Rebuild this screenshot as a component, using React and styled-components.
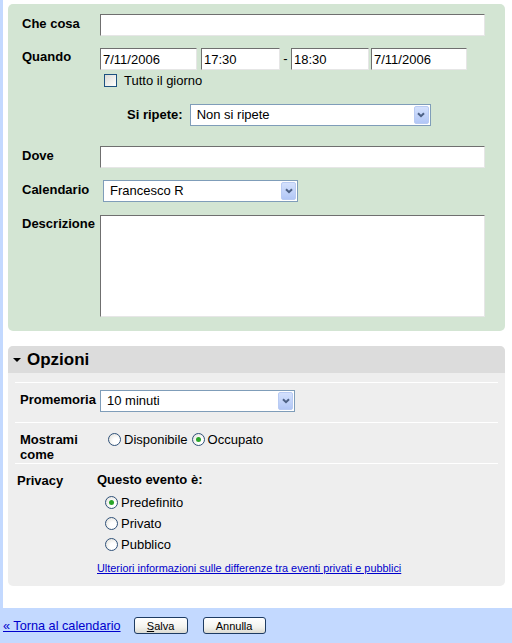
import React from "react";
import styled, { createGlobalStyle } from "styled-components";

const GlobalStyle = createGlobalStyle`
  body {
    margin: 0;
    background: #fff;
    font-family: "Liberation Sans", Arial, sans-serif;
    font-size: 13px;
    color: #000;
  }
`;

const Page = styled.div`
  min-height: 643px;
  display: flex;
  flex-direction: column;
`;

const Main = styled.main`
  flex: 1;
  border-left: 3px solid #c3d9ff;
  padding: 4px 7px 22px 5px;
  display: flex;
  flex-direction: column;
  gap: 15px;
`;

const EventPanel = styled.section`
  background: #d3e5d3;
  border-radius: 5px;
  padding: 10px 20px 14px 14px;
`;

const Row = styled.div`
  display: flex;
  align-items: ${({ $center }) => ($center ? "center" : "flex-start")};
  margin-top: ${({ $top }) => $top || 0}px;
  padding-left: ${({ $indent }) => $indent || 0}px;
`;

const Label = styled.label`
  width: ${({ $width }) => ($width ? `${$width}px` : "auto")};
  flex-shrink: 0;
  font-weight: bold;
  line-height: ${({ $lh }) => $lh || 16}px;
  padding-top: ${({ $pad }) => $pad || 0}px;
  margin-right: ${({ $gap }) => $gap || 0}px;
`;

const fieldBorder = `
  border: 1px solid;
  border-color: #6f6f6f #e6e6e6 #e6e6e6 #6f6f6f;
`;

const TextInput = styled.input`
  box-sizing: border-box;
  height: 22px;
  width: ${({ $width }) => ($width ? `${$width}px` : "auto")};
  flex: ${({ $width }) => ($width ? "none" : 1)};
  min-width: 0;
  ${fieldBorder}
  background: #fff;
  font: 13px "Liberation Sans", Arial, sans-serif;
  color: #000;
  padding: 0 2px;
  margin: 0 ${({ $gap }) => $gap || 0}px 0 0;
  outline: none;
`;

const TextArea = styled.textarea`
  box-sizing: border-box;
  flex: 1;
  height: 102px;
  ${fieldBorder}
  background: #fff;
  font: 13px "Liberation Sans", Arial, sans-serif;
  resize: none;
  margin: 0;
  padding: 2px;
  outline: none;
`;

const Dash = styled.span`
  width: 11px;
  text-align: center;
  line-height: 22px;
`;

const FieldColumn = styled.div`
  display: flex;
  flex-direction: column;
`;

const CheckRow = styled.label`
  display: flex;
  align-items: center;
  margin: 4px 0 0 4px;
  line-height: 13px;
  gap: 7px;
`;

const CheckBox = styled.span`
  box-sizing: border-box;
  width: 13px;
  height: 13px;
  border: 1px solid #1c5180;
  background: linear-gradient(135deg, #dcdcd7, #fff);
`;

const SelectBox = styled.div`
  box-sizing: border-box;
  width: ${({ $width }) => $width}px;
  height: 22px;
  margin-left: ${({ $offset }) => $offset || 0}px;
  border: 1px solid #7f9db9;
  background: #fff;
  display: flex;
  align-items: center;
  padding: 0 1px 0 6px;
`;

const SelectText = styled.span`
  flex: 1;
  line-height: 16px;
  white-space: nowrap;
`;

const SelectButton = styled.span`
  box-sizing: border-box;
  width: 15px;
  height: 18px;
  border-radius: 2px;
  border: 1px solid #b9cbf3;
  background: linear-gradient(#d4e1fd, #b2c7f6);
  display: flex;
  align-items: center;
  justify-content: center;
`;

const Select = ({ width, offset, children }) => (
  <SelectBox $width={width} $offset={offset}>
    <SelectText>{children}</SelectText>
    <SelectButton>
      <svg width="8" height="6" viewBox="0 0 8 6">
        <path d="M1 1.2 L4 4.2 L7 1.2" stroke="#4d6185" strokeWidth="2" fill="none" />
      </svg>
    </SelectButton>
  </SelectBox>
);

const OptionsPanel = styled.section`
  background: #eeeeee;
  border-radius: 5px;
  overflow: hidden;
`;

const OptionsHeader = styled.h2`
  margin: 0;
  height: 27px;
  background: #dcdcdc;
  display: flex;
  align-items: center;
  padding-left: 5px;
  gap: 6px;
  font-size: 17px;
  font-weight: bold;
`;

const Triangle = styled.span`
  width: 0;
  height: 0;
  border-left: 4px solid transparent;
  border-right: 4px solid transparent;
  border-top: 4px solid #000;
`;

const OptionsBody = styled.div`
  padding: 9px 7px 0;
`;

const OptionRow = styled.div`
  border-top: 1px solid #fff;
  display: flex;
  align-items: flex-start;
  padding: ${({ $pad }) => $pad};
`;

const RadioGroup = styled.div`
  display: flex;
  flex-direction: ${({ $column }) => ($column ? "column" : "row")};
  margin: ${({ $margin }) => $margin || 0};
  gap: ${({ $gap }) => $gap || 0}px;
`;

const RadioOption = styled.label`
  display: flex;
  align-items: center;
  height: ${({ $height }) => $height || 15}px;
  gap: 3px;
`;

const RadioDot = styled.span`
  box-sizing: border-box;
  width: 13px;
  height: 13px;
  border-radius: 50%;
  border: 1px solid #2f5179;
  background: radial-gradient(circle at 65% 65%, #fff 30%, #dedcd4);
  display: flex;
  align-items: center;
  justify-content: center;

  &::after {
    content: "";
    width: 5px;
    height: 5px;
    border-radius: 50%;
    background: ${({ $checked }) => ($checked ? "#2aa52a" : "transparent")};
  }
`;

const Radio = ({ checked, height, children }) => (
  <RadioOption $height={height}>
    <RadioDot $checked={checked} />
    {children}
  </RadioOption>
);

const SubTitle = styled.div`
  font-weight: bold;
  line-height: 16px;
`;

const Link = styled.a`
  color: #0000cc;
  text-decoration: underline;
  font-size: ${({ $size }) => $size || 13}px;
  line-height: ${({ $size }) => ($size ? $size + 2 : 16)}px;
  margin: ${({ $margin }) => $margin || 0};
  cursor: pointer;
`;

const Footer = styled.footer`
  height: 36px;
  background: #c3d9ff;
  display: flex;
  align-items: center;
  padding-left: 3px;
  gap: 15px;
`;

const BackLink = styled(Link)`
  margin-right: -2px;
  font-size: 12.7px;
`;

const Button = styled.button`
  box-sizing: border-box;
  width: ${({ $width }) => $width}px;
  height: 17px;
  padding: 0;
  border: 1px solid #1d3b62;
  border-radius: 3px;
  background: linear-gradient(#ffffff, #f3f3ee 60%, #dcdbd2);
  font: 11px "Liberation Sans", Arial, sans-serif;
  color: #000;
  cursor: pointer;

  u {
    text-decoration: underline;
  }
`;

const App = () => {
  return (
    <Page>
      <GlobalStyle />
      <Main>
        <EventPanel>
          <Row>
            <Label $width={78} $pad={2}>Che cosa</Label>
            <TextInput defaultValue="" readOnly />
          </Row>

          <Row $top={12}>
            <Label $width={78} $pad={1}>Quando</Label>
            <FieldColumn>
              <Row>
                <TextInput $width={97} $gap={4} defaultValue="7/11/2006" readOnly />
                <TextInput $width={79} defaultValue="17:30" readOnly />
                <Dash>-</Dash>
                <TextInput $width={78} $gap={2} defaultValue="18:30" readOnly />
                <TextInput $width={96} defaultValue="7/11/2006" readOnly />
              </Row>
              <CheckRow>
                <CheckBox />
                Tutto il giorno
              </CheckRow>
            </FieldColumn>
          </Row>

          <Row $top={17} $indent={105} $center>
            <Label $gap={7}>Si ripete:</Label>
            <Select width={241}>Non si ripete</Select>
          </Row>

          <Row $top={20}>
            <Label $width={78} $pad={2}>Dove</Label>
            <TextInput readOnly />
          </Row>

          <Row $top={12}>
            <Label $width={78} $pad={2}>Calendario</Label>
            <Select width={195} offset={3}>Francesco R</Select>
          </Row>

          <Row $top={13}>
            <Label $width={78} $pad={1}>Descrizione</Label>
            <TextArea readOnly />
          </Row>
        </EventPanel>

        <OptionsPanel>
          <OptionsHeader>
            <Triangle />
            Opzioni
          </OptionsHeader>
          <OptionsBody>
            <OptionRow $pad="7px 0 10px 5px">
              <Label $width={80} $pad={2}>Promemoria</Label>
              <Select width={195}>10 minuti</Select>
            </OptionRow>

            <OptionRow $pad="8px 0 1px 5px">
              <Label $width={80} $lh={15} $pad={1}>
                Mostrami
                <br />
                come
              </Label>
              <RadioGroup $margin="1px 0 0 8px" $gap={4}>
                <Radio>Disponibile</Radio>
                <Radio checked>Occupato</Radio>
              </RadioGroup>
            </OptionRow>

            <OptionRow $pad="8px 0 11px 2px">
              <Label $width={80} $pad={1}>Privacy</Label>
              <FieldColumn>
                <SubTitle>Questo evento è:</SubTitle>
                <RadioGroup $column $margin="4px 0 0 8px">
                  <Radio checked height={21}>Predefinito</Radio>
                  <Radio height={21}>Privato</Radio>
                  <Radio height={21}>Pubblico</Radio>
                </RadioGroup>
                <Link $size={10.9} $margin="7px 0 0 0">
                  Ulteriori informazioni sulle differenze tra eventi privati e pubblici
                </Link>
              </FieldColumn>
            </OptionRow>
          </OptionsBody>
        </OptionsPanel>
      </Main>

      <Footer>
        <BackLink>« Torna al calendario</BackLink>
        <Button $width={54}>
          <u>S</u>alva
        </Button>
        <Button $width={63}>Annulla</Button>
      </Footer>
    </Page>
  );
};

export default App;
